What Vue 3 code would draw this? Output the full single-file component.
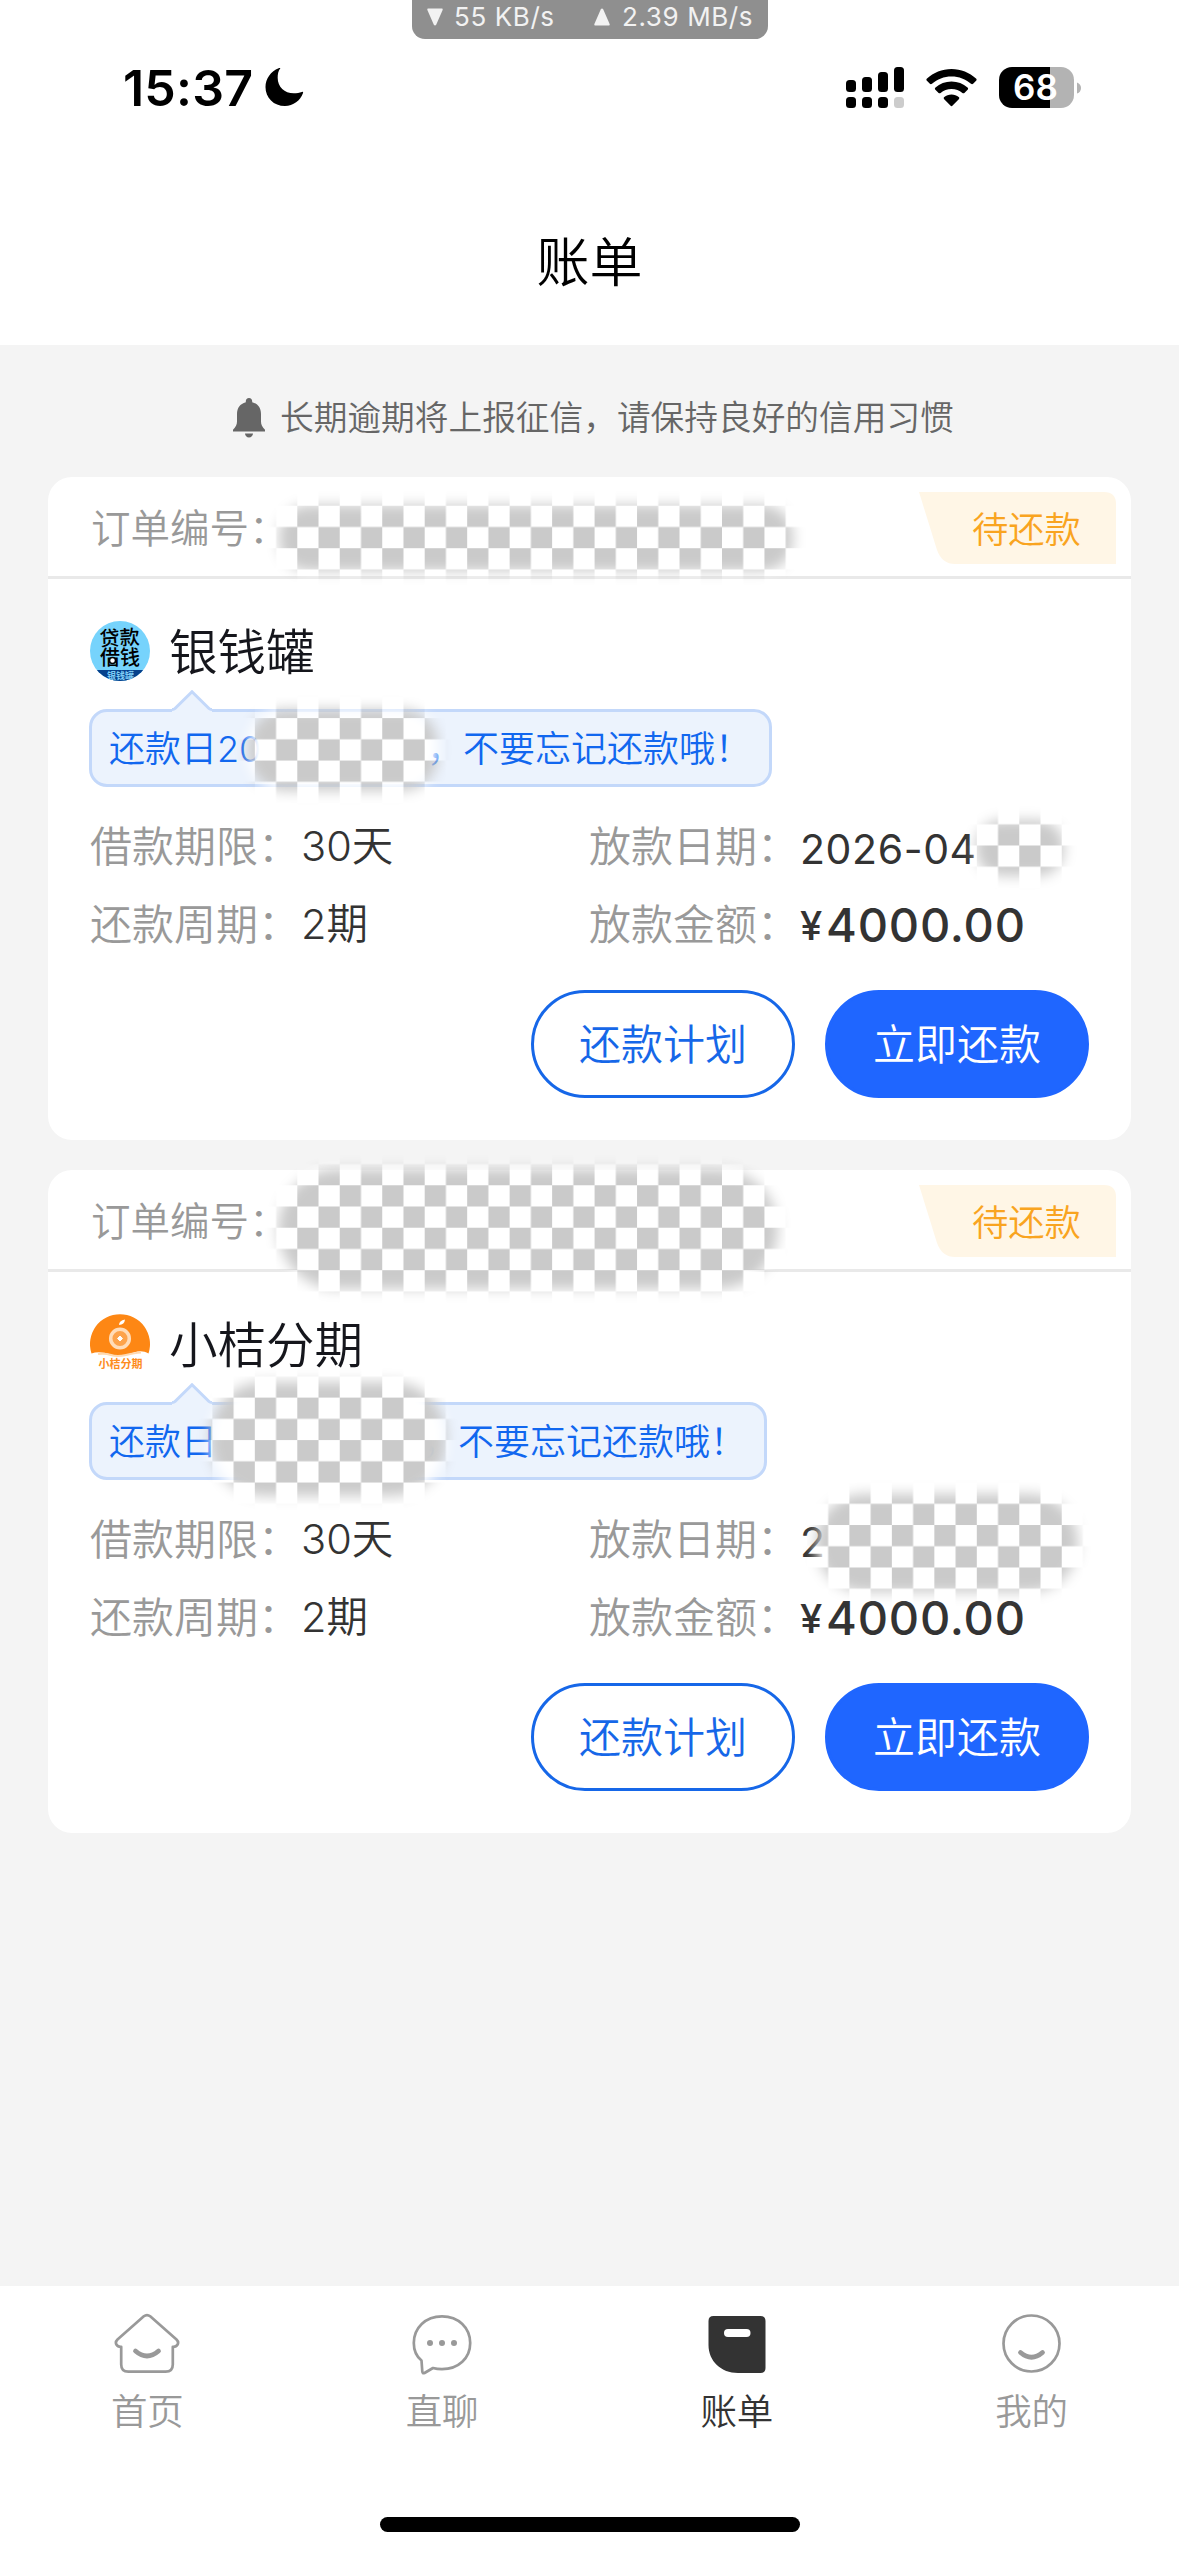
<script setup>
const bills = [
  {
    name: '银钱罐',
    logo: 'jar',
    date: '2026-04',
    day: '20',
    gap: 410,
    width: 683,
  },
  {
    name: '小桔分期',
    logo: 'orange',
    date: '2',
    day: '',
    gap: 405,
    width: 678,
  },
]
const tabs = ['首页', '直聊', '账单', '我的']
const smudges = [
  { x: 279, y: 505, w: 514, h: 66, r: 30 },
  { x: 248, y: 709, w: 190, h: 82, r: 36 },
  { x: 976, y: 820, w: 88, h: 56, r: 26 },
  { x: 278, y: 1169, w: 500, h: 120, r: 60 },
  { x: 210, y: 1382, w: 236, h: 114, r: 54 },
  { x: 816, y: 1494, w: 262, h: 98, r: 48 },
]
</script>

<template>
  <div class="page">
    <div class="speed">
      <svg class="tri" viewBox="0 0 16 18"><path d="M1 0.5H15Q16 0.5 15.6 2L9.3 16.5Q8 18.4 6.7 16.5L0.4 2Q0 .5 1 .5Z" fill="#f2f2f2" /></svg>
      <span class="down">55 KB/s</span>
      <svg class="tri" viewBox="0 0 16 18"><path d="M1 17.5H15Q16 17.5 15.6 16L9.3 1.5Q8 -.4 6.7 1.5L0.4 16Q0 17.5 1 17.5Z" fill="#f2f2f2" /></svg>
      <span class="up">2.39 MB/s</span>
    </div>

    <header class="header">
      <div class="status">
        <span class="time">15:37</span>
        <svg class="moon" viewBox="0 0 40 40"><path d="M15.5 0.6C13.6 3.2 13 6.6 13 10c0 9.500 7 16 16.500 16 3 0 6-.6 8.200-1.500 1-.4 1.700.2 1.300 1.200C36.300 33.500 29 39 20.500 39 9 39 .5 30.700.5 19.500.5 11 6 3.300 14 .2c1.300-.5 2.100-.4 1.500.4Z" /></svg>
        <span class="spacer"></span>
        <svg class="signal" viewBox="0 0 58 42">
          <rect x="0" y="13" width="10" height="12" rx="3.500" /><rect x="16" y="10" width="10" height="15" rx="3.500" /><rect x="32" y="5" width="10" height="20" rx="3.500" /><rect x="48" y="0" width="10" height="25" rx="3.500" />
          <rect x="0" y="30" width="10" height="11" rx="3.500" /><rect x="16" y="30" width="10" height="11" rx="3.500" /><rect x="32" y="30" width="10" height="11" rx="3.500" /><rect x="48" y="30" width="10" height="11" rx="3.500" fill="#ccc" />
        </svg>
        <svg class="wifi" viewBox="0 0 51 38">
          <path d="M25.500 0C35 0 43.500 3.600 50 9.600c.8.700.8 1.500.1 2.200l-3 3c-.6.600-1.400.600-2.100 0C39.800 10.200 33 7.500 25.500 7.500S11.200 10.200 6 14.800c-.7.600-1.500.6-2.100 0l-3-3c-.7-.7-.7-1.500.1-2.200C7.500 3.600 16 0 25.500 0Z" />
          <path d="M25.500 12.500c6.200 0 11.700 2.200 16 6 .8.700.8 1.500.1 2.200l-3.200 3.200c-.6.600-1.300.6-2 0-3-2.500-6.700-4-10.900-4s-7.900 1.500-10.900 4c-.7.600-1.400.6-2 0l-3.200-3.200c-.7-.7-.7-1.500.1-2.200 4.300-3.800 9.800-6 16-6Z" />
          <path d="M25.500 25.500c2.800 0 5.300 1 7.200 2.600.8.700.8 1.400.1 2.100l-6.200 6.400c-.7.700-1.500.7-2.200 0l-6.200-6.400c-.7-.7-.7-1.400.1-2.100 1.900-1.600 4.400-2.600 7.200-2.600Z" />
        </svg>
        <div class="battery"><span>68</span></div>
        <svg class="nub" viewBox="0 0 5 14"><path d="M0 0Q5 2 5 7T0 14Z" fill="#b3b3b3" /></svg>
      </div>
      <h1 class="title">账单</h1>
    </header>

    <div class="notice">
      <svg class="bell" viewBox="0 0 32 40">
        <path d="M16 0c2 0 3.200 1.400 3.200 3.300v.9C25 5.700 28 10 28 16v7.500c0 3 1.300 5.500 4 8.300V33.500H0V31.800c2.700-2.800 4-5.300 4-8.300V16C4 10 7 5.700 12.800 4.200v-.9C12.800 1.400 14 0 16 0ZM12 35.500h8c0 2.300-1.800 4-4 4s-4-1.700-4-4Z" fill="#666" />
      </svg>
      <span>长期逾期将上报征信，请保持良好的信用习惯</span>
    </div>

    <main class="list">
      <section v-for="bill in bills" :key="bill.name" class="card">
        <div class="card-head">
          <span class="order">订单编号：</span>
          <div class="tag">
            <svg class="tag-bg" viewBox="0 0 197 72"><path d="M0 0H185Q197 0 197 12V72H36Q23 72 18 58Z" fill="#fff6e6" /></svg>
            <span>待还款</span>
          </div>
        </div>
        <div class="brand">
          <svg v-if="bill.logo === 'jar'" class="logo" viewBox="0 0 60 60">
            <defs><clipPath id="disc"><circle cx="30" cy="30" r="30" /></clipPath></defs>
            <g clip-path="url(#disc)">
              <rect width="60" height="60" fill="#76d3fc" />
              <rect y="49" width="60" height="11" fill="#06418c" />
              <text x="30" y="24" class="logo-word" transform="rotate(-3 30 24)">贷款</text>
              <text x="30" y="44" class="logo-word">借钱</text>
              <circle cx="22.500" cy="39.500" r="3" fill="#fff" stroke="#000" stroke-width="1.500" />
              <text x="30.500" y="57.500" class="logo-sub">银钱罐</text>
            </g>
          </svg>
          <svg v-else class="logo" viewBox="0 0 60 60">
            <path d="M1.500 39.500A30 30 0 1 1 58.500 39.500C52 35.500 45 37.500 38 40.500Q30 43.500 21 40.500 9 36.500 1.500 39.500Z" fill="#fd8714" />
            <path d="M8 40Q15 39 21 41T36 41T51 38.500" fill="none" stroke="#ffd9b0" stroke-width="2" />
            <circle cx="30" cy="24.500" r="9.300" fill="#fda34b" stroke="#ffdcb8" stroke-width="3.500" />
            <path d="M30 22 32.500 24.500 30 27 27.500 24.500Z" fill="#fff" stroke="#fff" />
            <path d="M29 11Q29 6.500 35 5.500 34.500 10.500 29 11Z" fill="#fff" />
            <text x="30.500" y="53.500" class="logo-foot">小桔分期</text>
          </svg>
          <span class="name">{{ bill.name }}</span>
        </div>
        <div class="tip" :style="{ width: bill.width + 'px' }">
          <svg class="arrow" viewBox="0 0 40 22"><path d="M0 22V19.500L2.500 18.500 20 1.800 37.500 18.500 40 19.500V22Z" fill="#ecf3fd" /><path d="M0 19.500Q2 19.500 3 18.500L20 1.800 37 18.500Q38 19.500 40 19.500" fill="none" stroke="#c3d8fa" stroke-width="3" /></svg>
          <span class="tip-day">还款日{{ bill.day }}</span>
          <span class="tip-rest" :style="{ marginLeft: bill.gap - 92 + 'px' }">，不要忘记还款哦！</span>
        </div>
        <div class="info">
          <div class="cell"><span class="label">借款期限：</span><span class="value">30天</span></div>
          <div class="cell"><span class="label">放款日期：</span><span class="date">{{ bill.date }}</span></div>
          <div class="cell"><span class="label">还款周期：</span><span class="value">2期</span></div>
          <div class="cell"><span class="label">放款金额：</span><span class="yen">¥</span><span class="amount">4000.00</span></div>
        </div>
        <div class="actions">
          <button class="btn plan">还款计划</button>
          <button class="btn pay">立即还款</button>
        </div>
      </section>
    </main>

    <nav class="nav">
      <div class="tabs">
        <div v-for="(tab, i) in tabs" :key="tab" class="tab" :class="{ active: i === 2 }">
          <svg v-if="i === 0" class="icon" viewBox="0 0 66 62" fill="none" stroke="#999" stroke-width="2.700">
            <path d="M29.800 3.300Q33 .8 36.200 3.300L62.500 26.500Q65 29 63.600 31.500 62.200 34 58.800 33.800V51.500Q58.800 58.700 51.600 58.700H14.400Q7.200 58.700 7.200 51.500V33.800Q3.800 34 2.400 31.500 1 29 3.500 26.500Z" stroke-linejoin="round" />
            <path d="M21.500 38Q33 48 44.500 38" stroke-width="4.800" stroke-linecap="round" />
          </svg>
          <svg v-else-if="i === 1" class="icon" viewBox="0 0 66 62" fill="none" stroke="#999" stroke-width="2.700">
            <path d="M33 3.300C49.500 3.300 61.200 14.800 61.200 30S49.500 56.200 33 56.200Q28 56.200 24 55L15.500 60Q13.500 60.800 13.300 58.500L12.500 47.500C7.500 43.500 4.800 37 4.800 30 4.800 14.800 16.500 3.300 33 3.300Z" stroke-linejoin="round" />
            <g fill="#999" stroke="none"><circle cx="21" cy="30" r="3" /><circle cx="33" cy="30" r="3" /><circle cx="45" cy="30" r="3" /></g>
          </svg>
          <svg v-else-if="i === 2" class="icon" viewBox="0 0 66 62">
            <path d="M8.500 3H56.500Q61.500 3 61.500 8V55Q61.500 60 56.500 60H34C17 60 4.500 48 4.500 32V8Q4.500 3 9.500 3Z" fill="#333" />
            <rect x="20" y="16" width="26.500" height="8" rx="4" fill="#fff" />
          </svg>
          <svg v-else class="icon" viewBox="0 0 66 62" fill="none" stroke="#999" stroke-width="2.700">
            <circle cx="32.500" cy="30.500" r="28" />
            <path d="M21.500 39.500Q32.500 49 43.500 39.500" stroke-width="4.800" stroke-linecap="round" />
          </svg>
          <span>{{ tab }}</span>
        </div>
      </div>
      <div class="home-bar"></div>
    </nav>

    <svg class="mosaic" viewBox="0 0 1179 2556">
      <defs>
        <pattern id="checks" width="42.470" height="42.470" patternUnits="userSpaceOnUse" patternTransform="translate(0 -3.900)">
          <rect width="42.470" height="42.470" fill="#fff" />
          <rect width="21.235" height="21.235" fill="#cacaca" />
          <rect x="21.235" y="21.235" width="21.235" height="21.235" fill="#cacaca" />
        </pattern>
        <filter id="soft" x="-30%" y="-50%" width="160%" height="200%"><feGaussianBlur stdDeviation="6.500" /></filter>
        <mask id="smudge" maskUnits="userSpaceOnUse" x="0" y="0" width="1179" height="2556">
          <rect v-for="(s, i) in smudges" :key="i" :x="s.x" :y="s.y" :width="s.w" :height="s.h" :rx="s.r" fill="#fff" filter="url(#soft)" />
        </mask>
      </defs>
      <rect width="1179" height="2556" fill="url(#checks)" mask="url(#smudge)" />
    </svg>
  </div>
</template>

<style>
body {
  margin: 0;
  background: #f4f4f4;
}
</style>

<style scoped>
.page {
  position: relative;
  display: flex;
  flex-direction: column;
  width: 1179px;
  height: 2556px;
  overflow: hidden;
  background: #f4f4f4;
  font-family: Inter, "Noto Sans CJK SC", sans-serif;
  font-weight: 350;
  color: #333;
  white-space: nowrap;
}
.speed {
  position: absolute;
  left: 412px;
  top: 0;
  width: 356px;
  height: 39px;
  box-sizing: border-box;
  padding: 0 0 6px 15px;
  display: flex;
  align-items: center;
  border-radius: 0 0 13px 13px;
  background: #8f8f8f;
  color: #f2f2f2;
  font-size: 26px;
  font-weight: 400;
  letter-spacing: 0.6px;
}
.tri {
  width: 16px;
  height: 18px;
  flex: none;
}
.down {
  width: 140px;
  margin-left: 11px;
}
.up {
  margin-left: 12px;
}
.header {
  height: 345px;
  flex: none;
  background: #fff;
}
.status {
  display: flex;
  align-items: center;
  height: 41px;
  padding: 67px 98px 0 123px;
}
.time {
  width: 142px;
  font-size: 50px;
  font-weight: 600;
  letter-spacing: 0.2px;
  color: #000;
}
.moon {
  width: 39px;
  height: 39px;
}
.spacer {
  flex: 1;
}
.signal {
  width: 58px;
  height: 42px;
}
.wifi {
  width: 51px;
  height: 38px;
  margin: 0 22px;
}
.battery {
  width: 75px;
  height: 41px;
  border-radius: 13px;
  background: linear-gradient(90deg, #000 0 68%, #b3b3b3 68%);
  color: #fff;
  font-size: 35px;
  font-weight: 600;
  line-height: 41px;
  text-align: center;
  text-indent: -2px;
}
.nub {
  width: 4px;
  height: 14px;
  margin-left: 3px;
}
.title {
  margin: 113px 0 0;
  height: 84px;
  line-height: 84px;
  text-align: center;
  font-size: 53px;
  font-weight: 350;
  color: #000;
}
.notice {
  flex: none;
  display: flex;
  align-items: center;
  gap: 15px;
  height: 132px;
  padding: 14px 0 0 233px;
  font-size: 33.700px;
  line-height: 50px;
  color: #666;
  box-sizing: border-box;
}
.bell {
  width: 32px;
  height: 40px;
}
.list {
  display: flex;
  flex-direction: column;
  gap: 30px;
  padding: 0 48px;
  flex: 1;
}
.card {
  height: 663px;
  border-radius: 24px;
  background: #fff;
}
.card-head {
  display: flex;
  justify-content: space-between;
  height: 99px;
  padding: 0 15px 0 43px;
  border-bottom: 3px solid #e9e9e9;
}
.order {
  font-size: 39.500px;
  line-height: 104px;
  color: #999;
}
.tag {
  position: relative;
  width: 197px;
  height: 72px;
  margin-top: 15px;
  box-sizing: border-box;
  padding-left: 53px;
  font-size: 36.300px;
  line-height: 77px;
  color: #f9a420;
}
.tag span {
  position: relative;
}
.tag-bg {
  position: absolute;
  inset: 0;
  width: 197px;
  height: 72px;
}
.brand {
  display: flex;
  align-items: center;
  height: 60px;
  margin: 42px 0 0 42px;
}
.logo {
  width: 60px;
  height: 60px;
}
.logo-word {
  font-size: 20px;
  font-weight: 500;
  text-anchor: middle;
  fill: #000;
}
.logo-sub {
  font-size: 9px;
  font-weight: 700;
  text-anchor: middle;
  fill: #7fcdf5;
}
.logo-foot {
  font-size: 11px;
  font-weight: 700;
  text-anchor: middle;
  fill: #fd8c20;
}
.name {
  margin-left: 19px;
  padding-top: 4px;
  font-size: 48.500px;
  line-height: 60px;
  color: #15161c;
}
.tip {
  position: relative;
  display: flex;
  height: 78px;
  box-sizing: border-box;
  margin: 28px 0 0 41px;
  border: 3px solid #c3d8fa;
  border-radius: 18px;
  background: #ecf3fd;
  font-size: 36px;
  line-height: 75px;
  color: #1167ef;
}
.arrow {
  position: absolute;
  left: 80px;
  top: -22px;
  width: 40px;
  height: 22px;
}
.tip-day {
  width: 0;
  margin-left: 17px;
}
.info {
  display: grid;
  grid-template-columns: 499px 1fr;
  grid-auto-rows: 78px;
  margin: 20px 0 0 42px;
}
.cell {
  display: flex;
  line-height: 79px;
}
.label {
  width: 211px;
  font-size: 42px;
  color: #999;
}
.value {
  font-size: 41.500px;
}
.date {
  padding-top: 3px;
  font-size: 41px;
  font-weight: 400;
  letter-spacing: 0.6px;
}
.yen {
  width: 26px;
  padding-top: 1px;
  font-size: 40px;
  font-weight: 500;
}
.amount {
  font-size: 47px;
  font-weight: 500;
  letter-spacing: 0.8px;
}
.actions {
  display: flex;
  justify-content: flex-end;
  gap: 30px;
  margin: 27px 42px 0 0;
}
.btn {
  width: 264px;
  height: 108px;
  padding: 0 0 5px;
  border: 3px solid #1667e8;
  border-radius: 54px;
  background: #fff;
  color: #1667e8;
  font: inherit;
  font-size: 42px;
}
.pay {
  border-color: #1f66ff;
  background: #1f66ff;
  color: #fff;
}
.nav {
  flex: none;
  height: 270px;
  background: #fff;
  display: flex;
  flex-direction: column;
  align-items: center;
}
.tabs {
  display: flex;
  width: 100%;
  height: 231px;
}
.tab {
  flex: 1;
  display: flex;
  flex-direction: column;
  align-items: center;
  padding-top: 27px;
  font-size: 36.500px;
  line-height: 50px;
  color: #999;
}
.icon {
  width: 66px;
  height: 62px;
  margin-bottom: 12px;
}
.active {
  color: #333;
}
.home-bar {
  width: 420px;
  height: 15px;
  border-radius: 8px;
  background: #000;
}
.mosaic {
  position: absolute;
  inset: 0;
  width: 1179px;
  height: 2556px;
  pointer-events: none;
}
</style>
